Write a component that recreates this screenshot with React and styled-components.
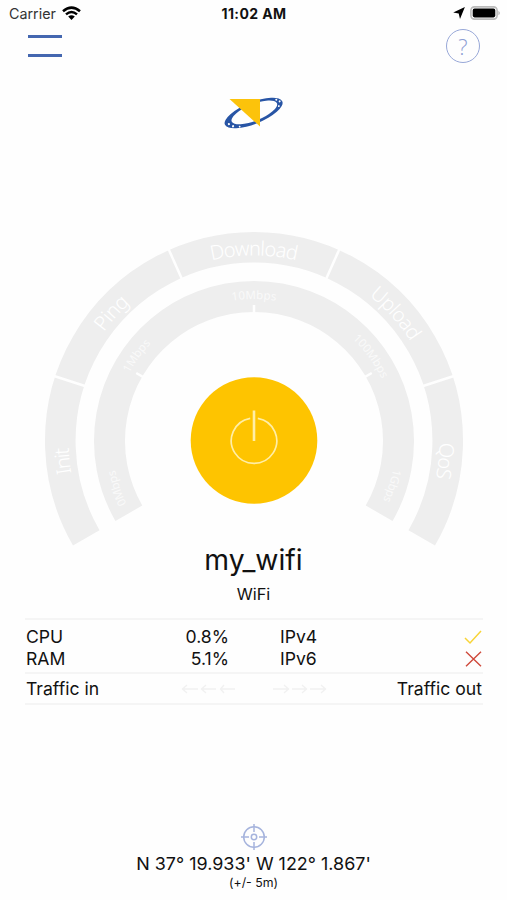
import React from "react";
import styled, { createGlobalStyle } from "styled-components";

const GlobalStyle = createGlobalStyle`
  * {
    box-sizing: border-box;
  }
  body {
    margin: 0;
    background: #fefefe;
    color: #111;
    font-family: Inter, "Liberation Sans", sans-serif;
  }
`;

const Screen = styled.div`
  width: 507px;
  height: 900px;
  display: flex;
  flex-direction: column;
  overflow: hidden;
`;

const StatusBar = styled.div`
  height: 28px;
  display: grid;
  grid-template-columns: 1fr auto 1fr;
  align-items: center;
  padding: 0 6px 2px 9px;
  font-size: 14.3px;
  & .carrier {
    display: flex;
    align-items: center;
    gap: 6px;
    color: #333;
  }
  & .icons {
    display: flex;
    align-items: center;
    justify-content: flex-end;
    gap: 5px;
  }
`;

const Time = styled.div`
  font-weight: 700;
  font-size: 14px;
  letter-spacing: 0.4px;
  margin-right: 2px;
`;

const Header = styled.div`
  height: 38px;
  display: flex;
  justify-content: space-between;
  align-items: flex-start;
  padding: 0 27px 0 28px;
`;

const MenuButton = styled.button`
  width: 34px;
  height: 22px;
  margin-top: 7px;
  padding: 0;
  background: none;
  border: solid #4467b0;
  border-width: 3px 0;
`;

const HelpButton = styled.button`
  width: 34px;
  height: 34px;
  margin-top: 1px;
  padding: 0;
  background: none;
  border: 1.5px solid #98a8d8;
  border-radius: 50%;
  color: #8c9dd3;
  font-family: "Open Sans", sans-serif;
  font-weight: 300;
  font-size: 22px;
  line-height: 29px;
`;

const Logo = styled.div`
  height: 72px;
  padding: 29px 0 0 222px;
  & svg {
    display: block;
  }
`;

const GaugeBox = styled.div`
  height: 400px;
  padding-top: 93px;
  & svg {
    display: block;
  }
`;

const ArcLabel = styled.text`
  fill: #fff;
  font-family: "Noto Sans", sans-serif;
  font-weight: ${(props) => (props.$small ? 400 : 300)};
  font-size: ${(props) => (props.$small ? 11.5 : 20)}px;
  fill-opacity: ${(props) => (props.$small ? 0.7 : 1)};
  text-anchor: middle;
`;

const Network = styled.div`
  height: 80px;
  text-align: center;
`;

const NetworkName = styled.div`
  font-size: 28.3px;
  line-height: 34px;
  padding-top: 5px;
`;

const NetworkType = styled.div`
  font-size: 16.3px;
  line-height: 20px;
  margin-top: 7px;
`;

const Stats = styled.div`
  margin: 0 24px 0 25px;
  border-top: 2px solid #f5f5f5;
  border-bottom: 2px solid #f5f5f5;
  font-size: 17.6px;
`;

const StatRow = styled.div`
  display: grid;
  grid-template-columns: 100px 103px 1fr auto;
  align-items: center;
  height: 22px;
  line-height: 22px;
  padding: 0 1px;
  & .value {
    text-align: right;
  }
  & .label {
    padding-left: 51px;
  }
`;

const StatGroup = styled.div`
  height: 52px;
  padding-top: 6px;
`;

const TrafficRow = styled.div`
  height: 31px;
  display: flex;
  align-items: center;
  justify-content: space-between;
  border-top: 2px solid #f5f5f5;
  padding: 0 1px;
`;

const Arrows = styled.svg`
  display: block;
  margin-left: 12px;
  fill: none;
  stroke: #f1f1f1;
  stroke-width: 1.3;
`;

const Location = styled.div`
  display: flex;
  flex-direction: column;
  align-items: center;
  margin-top: 118px;
  & .coords {
    font-size: 17.95px;
    line-height: 24px;
    margin-top: 1px;
  }
  & .accuracy {
    font-size: 12.3px;
    line-height: 14px;
  }
`;

const CX = 254;
const CY = 210;

// angles are in degrees, clockwise from the top
function point(r, angle) {
  const a = (angle * Math.PI) / 180;
  return `${(CX + r * Math.sin(a)).toFixed(2)} ${(CY - r * Math.cos(a)).toFixed(2)}`;
}

function arc(r, from, to) {
  const large = to - from > 180 ? 1 : 0;
  return `M${point(r, from)}A${r} ${r} 0 ${large} 1 ${point(r, to)}`;
}

const phases = [
  { name: "Init", angle: -96, length: 26 },
  { name: "Ping", angle: -48, length: 39 },
  { name: "Download", angle: 0, length: 86 },
  { name: "Upload", angle: 48, length: 62 },
  { name: "QoS", angle: 96, length: 36 },
];

const speeds = [
  { name: "0Mbps", angle: -109, length: 36 },
  { name: "1Mbps", angle: -54, length: 37 },
  { name: "10Mbps", angle: 0, length: 44 },
  { name: "100Mbps", angle: 54, length: 50 },
  { name: "1Gbps", angle: 108, length: 33 },
];

function Gauge() {
  return (
    <svg width="507" height="316" viewBox="0 0 507 316">
      <defs>
        <path id="phasePath" d={arc(185.5, -60, 60)} />
        <path id="speedPath" d={arc(142, -60, 60)} />
      </defs>
      <g fill="none" stroke="#eee">
        <path d={arc(193.7, -120, 120)} strokeWidth="30.6" />
        <path d={arc(144.5, -120, 120)} strokeWidth="31" />
      </g>
      <g stroke="#fefefe">
        {[-72, -24, 24, 72].map((a) => (
          <path key={a} d={`M${point(177, a)}L${point(211, a)}`} strokeWidth="2.5" />
        ))}
        {[-60, 0, 60].map((a) => (
          <path key={a} d={`M${point(127, a)}L${point(136, a)}`} strokeWidth="2.5" />
        ))}
      </g>
      {phases.map((p) => (
        <ArcLabel key={p.name} transform={`rotate(${p.angle} ${CX} ${CY})`}>
          <textPath href="#phasePath" startOffset="50%" textLength={p.length}>
            {p.name}
          </textPath>
        </ArcLabel>
      ))}
      {speeds.map((s) => (
        <ArcLabel $small key={s.name} transform={`rotate(${s.angle} ${CX} ${CY})`}>
          <textPath href="#speedPath" startOffset="50%" textLength={s.length}>
            {s.name}
          </textPath>
        </ArcLabel>
      ))}
      {/* start button */}
      <circle cx={CX} cy="209.5" r="63.3" fill="#fec400" />
      <g fill="none" stroke="#ffeea6" strokeWidth="1.7">
        <path d="M250.2 187.3A22.7 22.7 0 1 0 257.8 187.3" />
        <path d="M254 179.5V210" strokeWidth="2.6" />
      </g>
    </svg>
  );
}

function WifiIcon() {
  return (
    <svg width="19" height="14" viewBox="0 0 19 14">
      <g fill="none" stroke="#000" strokeWidth="2.5">
        <path d="M1 5.3Q9.5-2.1 18 5.3" />
        <path d="M4 8.4Q9.5 3.7 15 8.4" />
      </g>
      <path d="M6.2 10.6Q9.5 7.9 12.8 10.6L9.5 13.9Z" />
    </svg>
  );
}

function BatteryIcon() {
  return (
    <svg width="31" height="14" viewBox="0 0 31 14">
      <rect x="0.9" y="0.9" width="26.2" height="12.2" rx="3.5" fill="#fff" stroke="#bbb" strokeWidth="1.6" />
      <rect x="2.7" y="2.6" width="22.6" height="8.8" rx="1.8" />
      <path d="M28.5 4.7Q31 7 28.5 9.3Z" fill="#aaa" />
    </svg>
  );
}

function LogoIcon() {
  return (
    <svg width="64" height="36" viewBox="0 0 64 36">
      <g transform="translate(31.6 18) rotate(-22)">
        <path
          fill="#2855a5"
          fillRule="evenodd"
          d="M-31 0A31 10.8 0 1 0 31 0A31 10.8 0 1 0-31 0ZM-23.5-.3A24.4 8.3 0 1 0 25.3-.3A24.4 8.3 0 1 0-23.5-.3Z"
        />
        <g fill="#fff">
          <circle cx="-27" cy="1" r="1.1" />
          <circle cx="-24" cy="4.6" r="1.1" />
          <circle cx="-18" cy="7.4" r="0.9" />
          <circle cx="28.5" cy="-1" r="1" />
          <circle cx="26" cy="-3.8" r="1" />
          <circle cx="26" cy="3" r="0.9" />
        </g>
      </g>
      <path d="M7.5 4H38V31.5Z" fill="#fcc30b" />
    </svg>
  );
}

function TargetIcon() {
  return (
    <svg width="28" height="28" viewBox="0 0 28 28" fill="none" stroke="#a6b4dd" strokeWidth="1.5">
      <circle cx="14" cy="14" r="10.3" />
      <circle cx="14" cy="14" r="2.7" />
      <path d="M14 1V9M14 19V27M1 14H9M19 14H27" />
    </svg>
  );
}

export default function App() {
  return (
    <Screen>
      <GlobalStyle />
      <StatusBar>
        <div className="carrier">
          Carrier <WifiIcon />
        </div>
        <Time>11:02 AM</Time>
        <div className="icons">
          <svg width="12" height="12" viewBox="0 0 12 12">
            <path d="M11.9.1L7 11.9L5.7 6.5L.2 5.4Z" />
          </svg>
          <BatteryIcon />
        </div>
      </StatusBar>
      <Header>
        <MenuButton aria-label="Menu" />
        <HelpButton>?</HelpButton>
      </Header>
      <Logo>
        <LogoIcon />
      </Logo>
      {/* speed gauge */}
      <GaugeBox>
        <Gauge />
      </GaugeBox>
      <Network>
        <NetworkName>my_wifi</NetworkName>
        <NetworkType>WiFi</NetworkType>
      </Network>
      <Stats>
        <StatGroup>
          <StatRow>
            <span>CPU</span>
            <span className="value">0.8%</span>
            <span className="label">IPv4</span>
            <svg width="18" height="16" viewBox="0 0 18 16" fill="none" stroke="#f8d437" strokeWidth="1.5">
              <path d="M1 9L6 14L17 2" />
            </svg>
          </StatRow>
          <StatRow>
            <span>RAM</span>
            <span className="value">5.1%</span>
            <span className="label">IPv6</span>
            <svg width="17" height="16" viewBox="0 0 17 16" fill="none" stroke="#cf4a3c" strokeWidth="1.4">
              <path d="M1 .7L16 15.3M16 .7L1 15.3" />
            </svg>
          </StatRow>
        </StatGroup>
        <TrafficRow>
          <span>Traffic in</span>
          <Arrows width="146" height="12" viewBox="0 0 146 12">
            <path d="M1 6H17M6 2L1.5 6L6 10M20 6H35M25 2L20.5 6L25 10M39 6H54M43 2L39.5 6L43 10" />
            <path d="M92 6H108M103 2L107.5 6L103 10M111 6H126M121 2L125.5 6L121 10M129 6H145M140 2L144.5 6L140 10" />
          </Arrows>
          <span>Traffic out</span>
        </TrafficRow>
      </Stats>
      <Location>
        <TargetIcon />
        <div className="coords">N 37° 19.933' W 122° 1.867'</div>
        <div className="accuracy">(+/- 5m)</div>
      </Location>
    </Screen>
  );
}
